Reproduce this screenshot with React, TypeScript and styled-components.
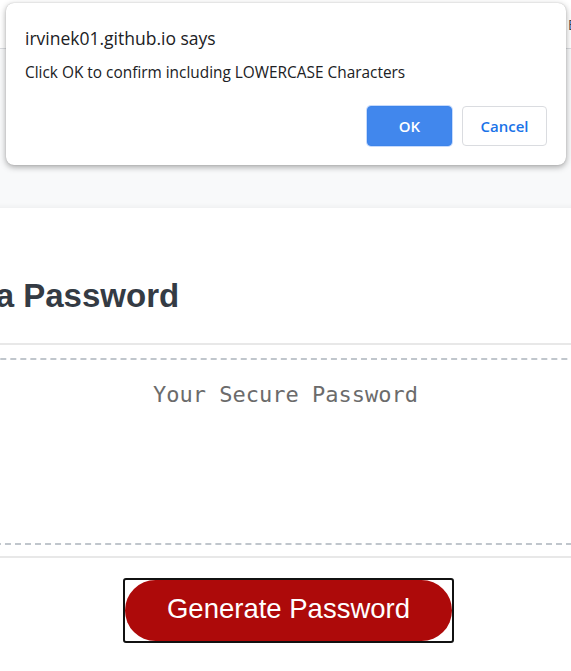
import styled, { createGlobalStyle } from "styled-components";

const GlobalStyle = createGlobalStyle`
  html, body {
    margin: 0;
    padding: 0;
    background: #ffffff;
    overflow: hidden;
  }
`;

const Page = styled.div`
  position: relative;
  width: 571px;
  height: 671px;
  display: flex;
  flex-direction: column;
  overflow: hidden;
  font-family: "Liberation Sans", Arial, sans-serif;
`;

const TopBar = styled.div`
  height: 48px;
  flex-shrink: 0;
  display: flex;
  align-items: center;
  justify-content: space-between;
  border-bottom: 1px solid #dadce0;
  font-family: "Open Sans", sans-serif;
  font-size: 14px;
`;

const BarText = styled.span<{ $tone: string }>`
  color: ${({ $tone }) => $tone};
  margin: ${({ $tone }) => ($tone === "#1a73e8" ? "0 0 0 -4px" : "0 -6px 0 0")};
`;

const Band = styled.div`
  height: 159px;
  flex-shrink: 0;
  background: #f8f9fa;
`;

const CardRow = styled.div`
  display: flex;
  justify-content: center;
  flex: 1;
`;

const Card = styled.section`
  width: 920px;
  flex-shrink: 0;
  background: #ffffff;
  box-shadow: 0 -2px 5px rgba(0, 0, 0, 0.04);
  display: flex;
  flex-direction: column;
`;

const CardHeader = styled.header`
  padding: 68px 18px 27px;
  border-bottom: 2px solid #e8e8e8;
`;

const Heading = styled.h1`
  margin: 0;
  font-size: 33px;
  line-height: 40px;
  font-weight: 700;
  color: #343b44;
`;

const CardBody = styled.div`
  padding: 13px 18px 11px;
`;

const Output = styled.textarea`
  display: block;
  box-sizing: border-box;
  width: 100%;
  height: 187px;
  resize: none;
  border: 2px dashed #c0c6cc;
  border-radius: 6px;
  padding: 20px 0 0;
  text-align: center;
  font-family: "DejaVu Sans Mono", "Liberation Mono", monospace;
  font-size: 22px;
  line-height: 30px;
  background: #ffffff;
  outline: none;

  &::placeholder {
    color: #6b6b6b;
  }
`;

const CardFooter = styled.footer`
  border-top: 2px solid #e8e8e8;
  padding: 20px 0 0;
  display: flex;
  justify-content: center;
`;

const FocusRing = styled.div`
  margin-left: 6px;
  border: 2px solid #111111;
  border-radius: 3px;
  display: flex;
`;

const GenerateButton = styled.button`
  width: 327px;
  height: 61px;
  padding: 0 0 3px;
  border: none;
  border-radius: 31px;
  background: #ad0a0a;
  color: #ffffff;
  font-family: "Liberation Sans", Arial, sans-serif;
  font-size: 27.5px;
  cursor: pointer;
`;

const Dialog = styled.div`
  position: absolute;
  left: 6px;
  top: 3px;
  width: 560px;
  height: 162px;
  box-sizing: border-box;
  background: #ffffff;
  border-radius: 8px;
  box-shadow: 0 2px 6px rgba(0, 0, 0, 0.35), 0 0 1px rgba(0, 0, 0, 0.25);
  padding: 24px 19px 0;
  font-family: "Open Sans", "Noto Sans", sans-serif;
  display: flex;
  flex-direction: column;
`;

const DialogTitle = styled.div`
  font-size: 17.5px;
  color: #202124;
  line-height: 22px;
`;

const DialogMessage = styled.div`
  margin-top: 14px;
  font-size: 15.4px;
  color: #202124;
  line-height: 20px;
`;

const DialogActions = styled.div`
  margin-top: 23px;
  display: flex;
  justify-content: flex-end;
  gap: 10px;
`;

const DialogButton = styled.button<{ $primary?: boolean }>`
  width: 85px;
  height: 40px;
  border-radius: 4px;
  font-family: "Open Sans", "Noto Sans", sans-serif;
  font-size: 15px;
  font-weight: 600;
  border: 1px solid ${({ $primary }) => ($primary ? "#3c84ea" : "#dadce0")};
  background: ${({ $primary }) => ($primary ? "#4187ed" : "#ffffff")};
  color: ${({ $primary }) => ($primary ? "#ffffff" : "#1a73e8")};
  box-shadow: ${({ $primary }) => ($primary ? "0 0 0 1px #c6dafc" : "none")};
`;

export default function App() {
  return (
    <Page>
      <GlobalStyle />
      <TopBar>
        <BarText $tone="#1a73e8">:</BarText>
        <BarText $tone="#3c4043">B</BarText>
      </TopBar>
      <Band />
      <CardRow>
        <Card>
          <CardHeader>
            <Heading>Generate a Password</Heading>
          </CardHeader>
          <CardBody>
            <Output readOnly placeholder="Your Secure Password" />
          </CardBody>
          <CardFooter>
            <FocusRing>
              <GenerateButton>Generate Password</GenerateButton>
            </FocusRing>
          </CardFooter>
        </Card>
      </CardRow>
      <Dialog>
        <DialogTitle>irvinek01.github.io says</DialogTitle>
        <DialogMessage>Click OK to confirm including LOWERCASE Characters</DialogMessage>
        <DialogActions>
          <DialogButton $primary>OK</DialogButton>
          <DialogButton>Cancel</DialogButton>
        </DialogActions>
      </Dialog>
    </Page>
  );
}
